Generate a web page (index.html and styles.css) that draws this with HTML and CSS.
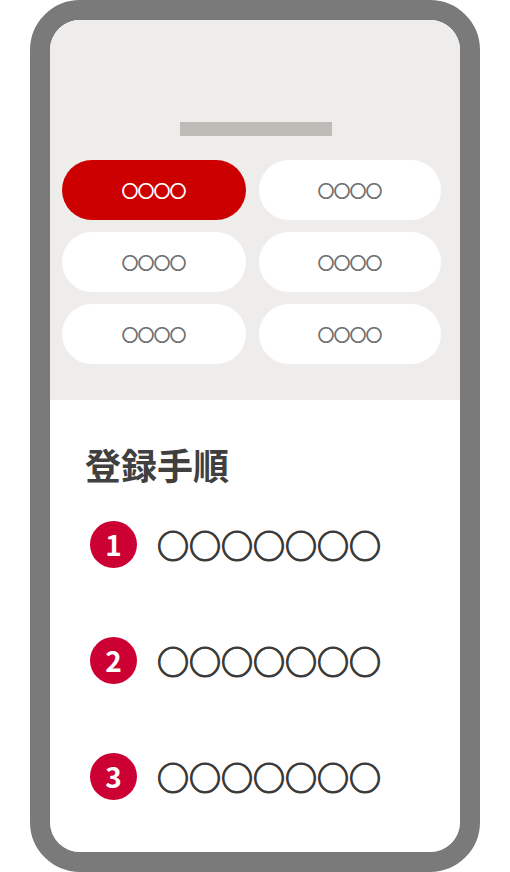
FILE: index.html
```html
<!DOCTYPE html>
<html lang="ja">
<head>
    <meta charset="UTF-8">
    <meta name="viewport" content="width=device-width, initial-scale=1.0">
    <title>登録手順</title>
    <link rel="stylesheet" href="styles.css">
</head>
<body>
    <div class="phone">
        <div class="screen">
            <!-- メニュー部分 -->
            <div class="menu">
                <div class="menu-bar"></div>
                <div class="menu-grid">
                    <button class="menu-btn active">○○○○</button>
                    <button class="menu-btn">○○○○</button>
                    <button class="menu-btn">○○○○</button>
                    <button class="menu-btn">○○○○</button>
                    <button class="menu-btn">○○○○</button>
                    <button class="menu-btn">○○○○</button>
                </div>
            </div>
            <!-- 手順 -->
            <div class="steps">
                <h2>登録手順</h2>
                <ol class="step-list">
                    <li class="step"><span class="num">1</span><span class="step-text">○○○○○○○</span></li>
                    <li class="step"><span class="num">2</span><span class="step-text">○○○○○○○</span></li>
                    <li class="step"><span class="num">3</span><span class="step-text">○○○○○○○</span></li>
                </ol>
            </div>
        </div>
    </div>
</body>
</html>
```

FILE: styles.css
```css
body {
    margin: 0;
    font-family: "Noto Sans CJK JP", "Noto Sans", sans-serif;
    background-color: #ffffff;
}
.phone {
    width: 410px;
    height: 832px;
    margin-left: 30px;
    border: 20px solid #7a7a7a;
    border-radius: 50px;
    overflow: hidden;
}
.screen {
    height: 100%;
    border-radius: 30px;
    overflow: hidden;
    background-color: #ffffff;
}
/* メニュー */
.menu {
    height: 380px;
    box-sizing: border-box;
    background-color: #eeedeb;
    padding-top: 102px;
}
.menu-bar {
    width: 152px;
    height: 14px;
    margin-left: 130px;
    background-color: #bebcb6;
}
.menu-grid {
    display: grid;
    grid-template-columns: 184px 182px;
    column-gap: 13px;
    row-gap: 12px;
    margin-top: 24px;
    padding-left: 12px;
}
.menu-btn {
    height: 60px;
    border: none;
    border-radius: 30px;
    background-color: #ffffff;
    color: #707070;
    font-family: inherit;
    font-size: 16px;
    -webkit-text-stroke: 1px #707070;
    padding: 0;
}
.menu-btn.active {
    background-color: #cc0000;
    color: #ffffff;
    -webkit-text-stroke: 1px #ffffff;
}
/* 手順 */
.steps {
    padding: 39px 0 0 35px;
}
.steps h2 {
    margin: 0;
    font-size: 36px;
    line-height: 50px;
    font-weight: bold;
    color: #404040;
}
.step-list {
    list-style: none;
    margin: 31px 0 0 0;
    padding: 0 0 0 5px;
}
.step {
    display: flex;
    align-items: center;
    height: 48px;
    margin-bottom: 68px;
}
.num {
    width: 47px;
    height: 47px;
    border-radius: 50%;
    background-color: #cc0033;
    color: #ffffff;
    font-size: 28px;
    font-weight: bold;
    display: flex;
    align-items: center;
    justify-content: center;
}
.step-text {
    margin-left: 20px;
    font-size: 32px;
    color: #3a3a3a;
    -webkit-text-stroke: 1.2px #3a3a3a;
    line-height: 1;
}
```
